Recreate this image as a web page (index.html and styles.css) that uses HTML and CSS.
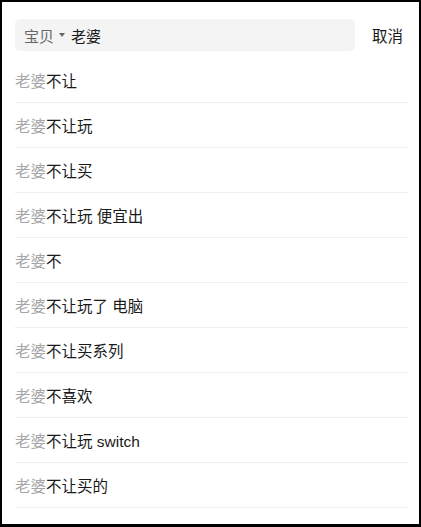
FILE: index.html
```html
<!DOCTYPE html>
<html lang="zh">
<head>
<meta charset="utf-8">
<link rel="stylesheet" href="styles.css">
</head>
<body>
<div class="page">
  <div class="search-bar">
    <div class="search-box">
      <span class="scope">宝贝</span>
      <span class="caret"></span>
      <span class="query">老婆</span>
    </div>
    <span class="cancel">取消</span>
  </div>
  <ul class="list">
    <li><span class="hl">老婆</span>不让</li>
    <li><span class="hl">老婆</span>不让玩</li>
    <li><span class="hl">老婆</span>不让买</li>
    <li><span class="hl">老婆</span>不让玩 便宜出</li>
    <li><span class="hl">老婆</span>不</li>
    <li><span class="hl">老婆</span>不让玩了 电脑</li>
    <li><span class="hl">老婆</span>不让买系列</li>
    <li><span class="hl">老婆</span>不喜欢</li>
    <li><span class="hl">老婆</span>不让玩 switch</li>
    <li><span class="hl">老婆</span>不让买的</li>
  </ul>
</div>
</body>
</html>
```
FILE: styles.css
```css
html {
  background: #000;
  height: 100%;
}
body {
  margin: 0;
  padding: 2px 2px 3px 2px;
  height: 100%;
  box-sizing: border-box;
  font-family: "Liberation Sans", "Noto Sans CJK SC", sans-serif;
}
.page {
  background: #fff;
  height: 100%;
  box-sizing: border-box;
  padding: 17px 0 0 13px;
  overflow: hidden;
}
.search-bar {
  display: flex;
  align-items: center;
  height: 32px;
}
.search-box {
  width: 340px;
  height: 32px;
  background: #f4f4f4;
  border-radius: 5px;
  display: flex;
  align-items: center;
  padding-left: 9px;
  box-sizing: border-box;
  font-size: 15px;
}
.scope {
  color: #666;
}
.caret {
  width: 0;
  height: 0;
  border-left: 3px solid transparent;
  border-right: 3px solid transparent;
  border-top: 4px solid #666;
  margin: 0 6px 0 5px;
}
.query {
  color: #1a1a1a;
}
.cancel {
  margin-left: 17px;
  font-size: 15.5px;
  color: #1a1a1a;
}
.list {
  list-style: none;
  margin: 7px 11px 0 0;
  padding: 0;
}
.list li {
  height: 45px;
  box-sizing: border-box;
  border-bottom: 1px solid #eeeeee;
  display: flex;
  align-items: center;
  font-size: 15.5px;
  color: #1a1a1a;
  white-space: pre;
}
.hl {
  color: #a6a6a6;
}
```
